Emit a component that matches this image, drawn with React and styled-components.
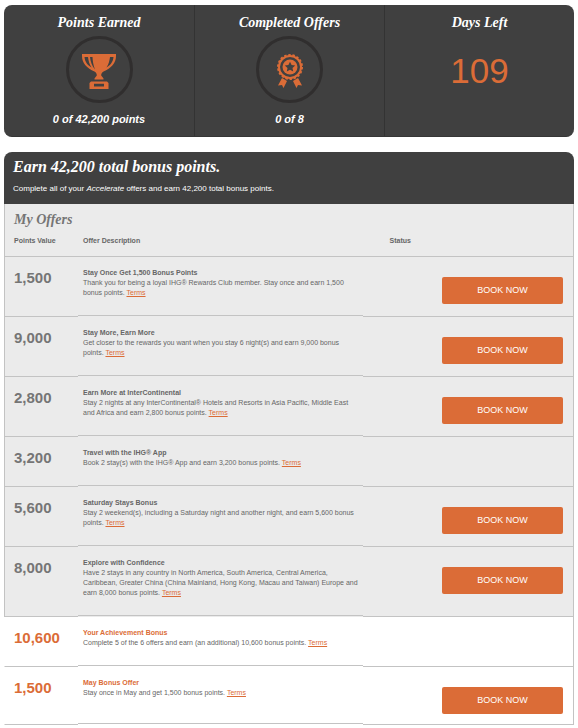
import React from 'react';
import styled, { createGlobalStyle } from 'styled-components';

const offers = [
    { points: '1,500', title: 'Stay Once Get 1,500 Bonus Points', text: 'Thank you for being a loyal IHG® Rewards Club member. Stay once and earn 1,500 bonus points.', book: true },
    { points: '9,000', title: 'Stay More, Earn More', text: 'Get closer to the rewards you want when you stay 6 night(s) and earn 9,000 bonus points.', book: true },
    { points: '2,800', title: 'Earn More at InterContinental', text: 'Stay 2 nights at any InterContinental® Hotels and Resorts in Asia Pacific, Middle East and Africa and earn 2,800 bonus points.', book: true },
    { points: '3,200', title: 'Travel with the IHG® App', text: 'Book 2 stay(s) with the IHG® App and earn 3,200 bonus points.' },
    { points: '5,600', title: 'Saturday Stays Bonus', text: 'Stay 2 weekend(s), including a Saturday night and another night, and earn 5,600 bonus points.', book: true },
    { points: '8,000', title: 'Explore with Confidence', text: 'Have 2 stays in any country in North America, South America, Central America, Caribbean, Greater China (China Mainland, Hong Kong, Macau and Taiwan) Europe and earn 8,000 bonus points.', book: true },
    { points: '10,600', title: 'Your Achievement Bonus', text: 'Complete 5 of the 6 offers and earn (an additional) 10,600 bonus points.', bonus: true },
    { points: '1,500', title: 'May Bonus Offer', text: 'Stay once in May and get 1,500 bonus points.', book: true, bonus: true },
];

const TrophyIcon = () => (
    <svg width="34" height="35" viewBox="0 0 34 35" fill="#db6c37" aria-hidden="true">
        <path fillRule="evenodd" d="M0 0H34V2C34 9.500 29 14 21.500 17.500C20 18.500 19 20 19.200 21.500L21.500 24.500V25.500H12.500V24.500L14.800 21.500C15 20 14 18.500 12.500 17.500C5 14 0 9.500 0 2ZM2.500 3C3 8 5.500 11 9.500 13.500C7.300 10 6.500 7 6 3ZM8 3C8.500 8 10 12 13 15.500C11.200 11 10.700 7 10.500 3ZM31.500 3H28C27.500 7 26.700 10 24.500 13.500C28.500 11 31 8 31.500 3Z" />
        <path fillRule="evenodd" d="M9 27.500H25L26.500 29V35H7.500V29ZM12 29.800V32.500H22V29.800Z" />
    </svg>
);

const MedalIcon = () => (
    <svg width="26" height="35" viewBox="0 0 26 35" aria-hidden="true">
        <path d="M5 24L10 27L6.500 34L5 31L1 31.500ZM21 24L16 27L19.500 34L21 31L25 31.500Z" fill="#db6c37" />
        <circle cx="13" cy="13" r="11" fill="none" stroke="#db6c37" strokeWidth="2" />
        <circle cx="13" cy="13" r="12" fill="none" stroke="#db6c37" strokeWidth="2" strokeDasharray="2.400 1.788" />
        <circle cx="13" cy="13" r="7.500" fill="#db6c37" />
        <path d="M13 7.800L14.600 11.100L18.200 11.500L15.500 14L16.200 17.600L13 15.800L9.800 17.600L10.500 14L7.800 11.500L11.400 11.100Z" fill="#404040" />
    </svg>
);

const App = () => {
    return (
        <>
            <GlobalStyle />
            <Summary>
                <Stat>
                    <StatTitle>Points Earned</StatTitle>
                    <Ring><TrophyIcon /></Ring>
                    <StatValue>0 of 42,200 points</StatValue>
                </Stat>
                <Stat>
                    <StatTitle>Completed Offers</StatTitle>
                    <Ring><MedalIcon /></Ring>
                    <StatValue>0 of 8</StatValue>
                </Stat>
                <Stat>
                    <StatTitle>Days Left</StatTitle>
                    <Days>109</Days>
                </Stat>
            </Summary>
            <Banner>
                <BannerTitle>Earn 42,200 total bonus points.</BannerTitle>
                <BannerText>Complete all of your <em>Accelerate</em> offers and earn 42,200 total bonus points.</BannerText>
            </Banner>
            <OfferTable>
                <Caption>My Offers</Caption>
                <thead>
                    <tr>
                        <HeadCell $first>Points Value</HeadCell>
                        <HeadCell $wide>Offer Description</HeadCell>
                        <HeadCell $last>Status</HeadCell>
                    </tr>
                </thead>
                <tbody>
                    {offers.map((offer) => (
                        <OfferRow key={offer.title} $bonus={offer.bonus}>
                            <PointsCell>{offer.points}</PointsCell>
                            <DescriptionCell>
                                <OfferTitle>{offer.title}</OfferTitle>
                                {offer.text} <Terms href="#terms">Terms</Terms>
                            </DescriptionCell>
                            <StatusCell>
                                {offer.book && <BookButton type="button">BOOK NOW</BookButton>}
                            </StatusCell>
                        </OfferRow>
                    ))}
                </tbody>
            </OfferTable>
        </>
    );
}

export default App;

const GlobalStyle = createGlobalStyle`
  * {
    box-sizing: border-box;
  }

  body {
    margin: 5px 4px 0;
    background: #fff;
    font-family: "Liberation Sans", Arial, sans-serif;
  }
`

const Summary = styled.section`
  display: grid;
  grid-template-columns: repeat(3, 1fr);
  margin-bottom: 15px;
  border-radius: 8px;
  border-bottom: 1px solid #363636;
  background: #404040;
  color: #fff;
`

const Stat = styled.div`
  display: flex;
  flex-direction: column;
  align-items: center;
  padding: 10px 0 9px;

  & + & {
    border-left: 1px solid #333;
  }
`

const StatTitle = styled.h2`
  margin: 0 0 5px;
  font: italic bold 14px/16px "Liberation Serif", Georgia, serif;
`

const Ring = styled.div`
  display: flex;
  align-items: center;
  justify-content: center;
  width: 67px;
  height: 67px;
  margin-bottom: 9px;
  padding-top: 4px;
  border: 3px solid #302e2e;
  border-radius: 50%;
`

const StatValue = styled.div`
  font-size: 11px;
  font-style: italic;
  font-weight: bold;
  line-height: 15px;
`

const Days = styled.div`
  margin-top: 15px;
  color: #db6c37;
  font-size: 35px;
  line-height: 40px;
`

const Banner = styled.header`
  padding: 5px 9px;
  border-radius: 8px 8px 0 0;
  background: #404040;
  color: #fff;
`

const BannerTitle = styled.h1`
  margin: 0 0 6px;
  font: italic bold 16px/20px "Liberation Serif", Georgia, serif;
`

const BannerText = styled.p`
  margin: 0;
  padding-bottom: 4px;
  font-size: 8px;
  line-height: 12px;
`

const OfferTable = styled.table`
  width: 100%;
  table-layout: fixed;
  border-spacing: 0;
  border-right: 1px solid #c3c3c3;
  color: #666;
  font-size: 7px;
  line-height: 10px;
`

const Caption = styled.caption`
  padding: 6px 9px 2px;
  border: solid #c3c3c3;
  border-width: 0 1px;
  background: #ebebeb;
  color: #757575;
  font: italic bold 14px/20px "Liberation Serif", Georgia, serif;
  text-align: left;
`

const HeadCell = styled.th`
  width: ${(props) => (props.$first ? '74px' : props.$wide ? '50%' : 'auto')};
  padding: 4px 0 10px ${(props) => (props.$first ? '9px' : props.$last ? '27px' : '5px')};
  border-bottom: 1px solid #c3c3c3;
  border-left: ${(props) => (props.$first ? '1px solid #c3c3c3' : 'none')};
  background: #ebebeb;
  text-align: left;
`

const PointsCell = styled.td`
  padding: 11px 0 0 9px;
  border-bottom: 1px solid #c3c3c3;
  border-left: 1px solid #c3c3c3;
  font-size: 15px;
  font-weight: bold;
  line-height: 20px;
`

const DescriptionCell = styled.td`
  padding: 11px 2px 19px 5px;
`

const StatusCell = styled.td`
  padding: 20px 10px 10px;
  border-bottom: 1px solid #c3c3c3;
  text-align: right;
`

const OfferTitle = styled.strong`
  display: block;
`

const OfferRow = styled.tr`
  background: ${(props) => (props.$bonus ? '#fff' : '#ebebeb')};
  vertical-align: top;

  ${PointsCell} {
    border-left-color: ${(props) => (props.$bonus ? 'transparent' : '#c3c3c3')};
    color: ${(props) => (props.$bonus ? '#db6c37' : '#757575')};
  }

  ${DescriptionCell} {
    box-shadow: inset 0 -1px ${(props) => (props.$bonus ? '#fff' : '#ebebeb')}, inset 0 -2px #c3c3c3;
  }

  ${OfferTitle} {
    color: ${(props) => (props.$bonus ? '#db6c37' : 'inherit')};
  }
`

const Terms = styled.a`
  color: #db6c37;
`

const BookButton = styled.button`
  display: inline-block;
  width: 121px;
  height: 27px;
  padding: 0 0 2px;
  border: none;
  border-radius: 2px;
  background: #db6c37;
  color: #fff;
  font-family: inherit;
  font-size: 9px;
  vertical-align: top;
  cursor: pointer;
`
